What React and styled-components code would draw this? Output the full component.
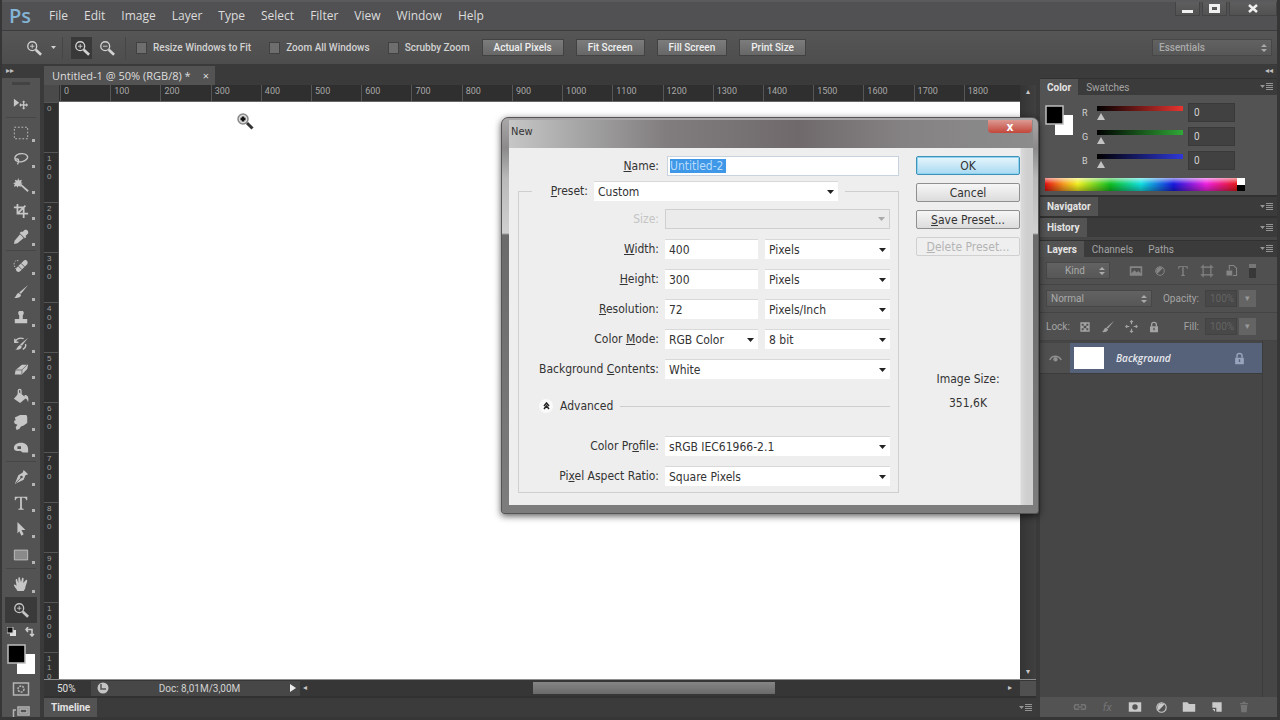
import React, { useState } from "react";
import styled, { createGlobalStyle, css } from "styled-components";

const MENUS = ["File", "Edit", "Image", "Layer", "Type", "Select", "Filter", "View", "Window", "Help"];
const ZOOM_OPTIONS = ["Resize Windows to Fit", "Zoom All Windows", "Scrubby Zoom"];
const ZOOM_BUTTONS = ["Actual Pixels", "Fit Screen", "Fill Screen", "Print Size"];
const RULER_X = Array.from({ length: 19 }, (_, i) => String(i * 100));
const RULER_Y = Array.from({ length: 12 }, (_, i) => String(i * 100));

const CHANNELS = [
    { name: "R", color: "#e8342f" },
    { name: "G", color: "#2fa836" },
    { name: "B", color: "#2f38d8" },
];

const TOOL_GROUPS = [
    ["move"],
    ["marquee", "lasso", "wand", "crop", "eyedropper"],
    ["heal", "brush", "stamp", "history", "eraser", "bucket", "smudge", "dodge"],
    ["pen", "type", "arrow", "rect"],
    ["hand", "zoom"],
];

const line = { fill: "none", stroke: "currentColor", strokeWidth: 1.5 };

const ICONS = {
    move: (
        <>
            <path d="M1 3v9l6-4.500z" />
            <path d="M12 5l2 2h-1.300v2.300H15V8l2 2.200-2 2.200V11h-2.300v2.300H14l-2 2-2-2h1.300V11H9v1.300l-2-2.100L9 8v1.300h2.300V7H10z" />
        </>
    ),
    marquee: <path {...line} strokeWidth="1" strokeDasharray="2 2" d="M1.500 2.500h15v13h-15z" />,
    lasso: (
        <path {...line} d="M4 11C0 8 3 3.500 9 3s9 3 6.500 6S8 13 4.500 11.500 3 8.500 5 9s1.500 3 0 6" />
    ),
    wand: (
        <>
            <path d="M6 1l1 3 3-1-1 3 2 1-3 1 1 3-3-1-1 2-1-2-3 1 1-3-2-1 3-1-1-3 3 1z" />
            <path {...line} strokeWidth="2" d="M8 8l9 8" />
        </>
    ),
    crop: <path {...line} strokeWidth="2" d="M5 1v11h12M1 5h11v12M5 12L14 3" />,
    eyedropper: (
        <>
            <path d="M11 3l2-2c2-1 5 1 4 4l-3 3 1 1-1.500 1.500-6-6L9 3z" />
            <path d="M8 6l4 4-7 6-4 1 1-4z" />
        </>
    ),
    heal: (
        <>
            <path {...line} strokeWidth="1" strokeDasharray="1.500 1.500" d="M6 3C2 2 0 6 2 10s3 4 4 4" />
            <path d="M12 3c2-2 6 1 4 4l-8 8c-3 2-6-1-4-4z" />
            <path stroke="#535353" strokeWidth="1" d="M9 6l4 4M6 9l4 4" />
        </>
    ),
    brush: (
        <>
            <path d="M17 1L9 11l-2-1.500z" />
            <path d="M6.500 10l2.500 2c0 3-4 4-8 3.500 3-1 2.500-5 5.500-5.500z" />
        </>
    ),
    stamp: <path d="M7 1h4c2 1 1 4 0 5v4h5v5H2v-5h5V6C6 5 5 2 7 1z" />,
    history: (
        <>
            <path d="M17 2l-7 9-2-1.500zM8 10l2 2c-1 3-4 4-8 3 3 0 3-4 6-5z" />
            <path {...line} d="M2 3v4h4M2.500 6C5 2 9 2 12 3M14 9c1 3-1 5-3 6" />
        </>
    ),
    eraser: (
        <>
            <path d="M10 3h7l-1 5-6 6H2l1-5z" />
            <path stroke="#6b6b6b" d="M3 9h7l6-6M10 9v5" fill="none" />
        </>
    ),
    bucket: (
        <>
            <path d="M7 5l8 6-7 6-7-5z" />
            <path {...line} d="M6 8V3c0-2 3-2 3 0v5" />
            <path d="M13 8c4 0 5 3 4 8-1-3-2-4-4-5z" />
        </>
    ),
    smudge: <path d="M8 1h7l1 2v7l-4 3-3 1-2 3-3 1-1-3 2-3-3-1-1-3 2-1-1-3z" />,
    dodge: (
        <path
            fillRule="evenodd"
            d="M1 9c0-4 4-6 8-6 5 0 8 3 8 7v4h-6l-3-2c-4 1-7 0-7-3zm4-2v3h4V7z"
        />
    ),
    pen: (
        <>
            <path d="M12 1l5 5-3 1-2 5-10 5 4-10 5-3z" />
            <path stroke="#535353" strokeWidth="1" d="M3 16l6-6" />
            <circle cx="9.500" cy="9" r="1.500" fill="#535353" />
        </>
    ),
    type: <path d="M2 2h14v4h-1c-.5-2-1-3-3-3h-2v11c0 1 .5 1.500 2 1.500v1H6v-1c1.500 0 2-.5 2-1.500V3H6C4 3 3.500 4 3 6H2z" />,
    arrow: <path d="M5 1l9 9H9.500l2.500 5-2.500 1.500L7 11.500 5 14z" />,
    rect: <path fill="#8a8a8a" stroke="currentColor" d="M1.500 3.500h15v11h-15z" />,
    hand: (
        <path d="M5 17c-1-3-4-5-4-7 1-1 2 0 3 1L3 5c0-2 2-2 2 0l1 3V3c0-2 2-2 2 0l1 4 1-4c0-2 2-1 2 0l-.5 5L14 5c1-1 2-1 2 1l-2 6c0 2-1 3-2 5z" />
    ),
    zoom: (
        <>
            <circle {...line} cx="7" cy="7" r="5" />
            <path d="M4.500 7h5M7 4.500v5" stroke="currentColor" />
            <path {...line} strokeWidth="3" d="M11 11l6 5.500" />
        </>
    ),
    zoomOut: (
        <>
            <circle {...line} cx="7" cy="7" r="5" />
            <path d="M4.500 7h5" stroke="currentColor" />
            <path {...line} strokeWidth="3" d="M11 11l6 5.500" />
        </>
    ),
    image: <path fillRule="evenodd" d="M1 3h16v12H1zm2 2v7l4-4 3 3 2-2 3 3V5z" />,
    adjust: (
        <>
            <circle {...line} cx="9" cy="9" r="6.500" />
            <path d="M9 3a6 6 0 0 0-4 10l8-8a6 6 0 0 0-4-2z" />
        </>
    ),
    shape: <path {...line} d="M4 4h10v10H4zM1 4h3V1M14 1v3h3M1 14h3v3M17 14h-3v3" />,
    smart: (
        <>
            <path {...line} d="M6 8V2h6l4 4v10h-5" />
            <path d="M2 9h8v7H2z" />
        </>
    ),
    pixels: <path fillRule="evenodd" d="M2 2h14v14H2zm2 2v3h3V4zm7 0v3h3V4zM7 7v4h4V7zm-3 4v3h3v-3zm7 0v3h3v-3z" />,
    cross: <path {...line} d="M9 1v5M9 12v5M1 9h5M12 9h5M7 3l2-2 2 2M7 15l2 2 2-2M3 7L1 9l2 2M15 7l2 2-2 2" />,
    lock: (
        <>
            <path {...line} strokeWidth="2" d="M5.500 8V5c0-4 7-4 7 0v3" />
            <path fillRule="evenodd" d="M3 8h12v9H3zm5 2v4h2v-4z" />
        </>
    ),
    eye: (
        <>
            <path {...line} strokeWidth="2" d="M1 11c3-7 12-7 16 0" />
            <circle cx="9" cy="10" r="3" />
        </>
    ),
    link: <path {...line} strokeWidth="2" d="M8 6H4C1 6 1 12 4 12h4M10 6h4c3 0 3 6 0 6h-4M6 9h6" />,
    mask: <path fillRule="evenodd" d="M1 3h16v12H1zm8 2.500a3.500 3.500 0 1 0 0 7 3.500 3.500 0 1 0 0-7z" />,
    folder: <path d="M1 3h6l2 2h8v10H1z" />,
    newLayer: <path fillRule="evenodd" d="M2 2h14v14H8V10H2zm0 10h4v4z" />,
    trash: <path d="M7 1h4v2h4v2H3V3h4zM4 6h10l-1 11H5z" />,
    quickMask: (
        <>
            <path {...line} d="M1.500 3h15v12h-15z" />
            <circle {...line} cx="9" cy="9" r="3" strokeDasharray="2 1" />
        </>
    ),
    screenMode: <path {...line} d="M6 3h11v8H6zM4 6H1.500v9H13v-2M8 5h7v4H8z" />,
};

function Icon({ name, size = 16 }) {
    return (
        <svg width={size} height={size} viewBox="0 0 18 18" fill="currentColor" aria-hidden="true">
            {ICONS[name]}
        </svg>
    );
}

function PanelMenu() {
    return (
        <PanelMenuButton aria-label="Panel menu">
            <svg width="13" height="8" viewBox="0 0 13 8" fill="currentColor">
                <path d="M0 2h5L2.500 5zM6 0h7v1H6zM6 2h7v1H6zM6 4h7v1H6zM6 6h7v1H6z" />
            </svg>
        </PanelMenuButton>
    );
}

function UpDown() {
    return (
        <svg width="6" height="10" viewBox="0 0 6 10" fill="currentColor">
            <path d="M0 4l3-3 3 3zM0 6h6L3 9z" />
        </svg>
    );
}

function Combo({ id, value, disabled, label }) {
    return (
        <ComboBox $disabled={disabled}>
            <select id={id} aria-label={label} disabled={disabled} defaultValue={value}>
                <option>{value}</option>
            </select>
            <svg width="7" height="4" viewBox="0 0 7 4" fill="currentColor">
                <path d="M0 0h7L3.500 4z" />
            </svg>
        </ComboBox>
    );
}

function NewDialog() {
    const [name, setName] = useState("Untitled-2");
    const [width, setWidth] = useState("400");
    const [height, setHeight] = useState("300");
    const [resolution, setResolution] = useState("72");

    return (
        <Dialog role="dialog" aria-labelledby="dialog-title">
            <DialogTitle>
                <h2 id="dialog-title">New</h2>
                <CloseDialog aria-label="Close">x</CloseDialog>
            </DialogTitle>
            <DialogBody>
                <Form>
                    <NameRow>
                        <Label htmlFor="name"><u>N</u>ame:</Label>
                        <NameField>
                            <NameInput id="name" size="8" value={name} onChange={(e) => setName(e.target.value)} />
                        </NameField>
                    </NameRow>
                    <Group>
                        <legend>
                            <Label htmlFor="preset"><u>P</u>reset:</Label>
                            <Combo id="preset" value="Custom" />
                        </legend>
                        <Rows>
                            <Row>
                                <Label htmlFor="size" $disabled>Size:</Label>
                                <Combo id="size" value="" disabled />
                            </Row>
                            <Row>
                                <Label htmlFor="width"><u>W</u>idth:</Label>
                                <Pair>
                                    <TextInput id="width" value={width} onChange={(e) => setWidth(e.target.value)} />
                                    <Combo label="Width unit" value="Pixels" />
                                </Pair>
                            </Row>
                            <Row>
                                <Label htmlFor="height"><u>H</u>eight:</Label>
                                <Pair>
                                    <TextInput id="height" value={height} onChange={(e) => setHeight(e.target.value)} />
                                    <Combo label="Height unit" value="Pixels" />
                                </Pair>
                            </Row>
                            <Row>
                                <Label htmlFor="resolution"><u>R</u>esolution:</Label>
                                <Pair>
                                    <TextInput id="resolution" value={resolution} onChange={(e) => setResolution(e.target.value)} />
                                    <Combo label="Resolution unit" value="Pixels/Inch" />
                                </Pair>
                            </Row>
                            <Row>
                                <Label htmlFor="mode">Color <u>M</u>ode:</Label>
                                <Pair>
                                    <Combo id="mode" value="RGB Color" />
                                    <Combo label="Bit depth" value="8 bit" />
                                </Pair>
                            </Row>
                            <Row>
                                <Label htmlFor="contents">Background <u>C</u>ontents:</Label>
                                <Combo id="contents" value="White" />
                            </Row>
                        </Rows>
                        <Advanced>
                            <button type="button" aria-label="Collapse advanced">
                                <svg width="7" height="8" viewBox="0 0 7 8" fill="none" stroke="#222" strokeWidth="1.500">
                                    <path d="M1 4l2.500-3L6 4M1 7l2.500-3L6 7" />
                                </svg>
                            </button>
                            Advanced
                            <hr />
                        </Advanced>
                        <Rows>
                            <Row>
                                <Label htmlFor="profile">Color Pr<u>o</u>file:</Label>
                                <Combo id="profile" value="sRGB IEC61966-2.1" />
                            </Row>
                            <Row>
                                <Label htmlFor="ratio">Pi<u>x</u>el Aspect Ratio:</Label>
                                <Combo id="ratio" value="Square Pixels" />
                            </Row>
                        </Rows>
                    </Group>
                </Form>
                <Actions>
                    <ActionButton $primary>OK</ActionButton>
                    <ActionButton>Cancel</ActionButton>
                    <ActionButton><u>S</u>ave Preset...</ActionButton>
                    <ActionButton disabled><u>D</u>elete Preset...</ActionButton>
                    <ImageSize>
                        <dt>Image Size:</dt>
                        <dd>351,6K</dd>
                    </ImageSize>
                </Actions>
            </DialogBody>
        </Dialog>
    );
}

function ColorPanel() {
    return (
        <section>
            <Tabs>
                <Tab $active>Color</Tab>
                <Tab>Swatches</Tab>
                <PanelMenu />
            </Tabs>
            <ColorBody>
                <ColorControls>
                    <Swatches />
                    <Channels>
                        {CHANNELS.map(({ name, color }) => (
                            <Channel key={name}>
                                <label htmlFor={"channel" + name}>{name}</label>
                                <Slider id={"channel" + name} type="range" min="0" max="255" defaultValue="0" $color={color} />
                                <ChannelValue aria-label={name + " value"} defaultValue="0" />
                            </Channel>
                        ))}
                    </Channels>
                </ColorControls>
                <Spectrum>
                    <Hues />
                    <BlackWhite />
                </Spectrum>
            </ColorBody>
        </section>
    );
}

function Swatches() {
    return (
        <svg width="28" height="30" viewBox="0 0 28 30" aria-hidden="true">
            <path fill="#fff" d="M10 10h18v20H10z" />
            <path fill="#000" stroke="#bdbdbd" strokeWidth="1.500" d="M1 1h17v18H1z" />
        </svg>
    );
}

function LayersPanel() {
    return (
        <LayersSection>
            <Tabs>
                <Tab $active>Layers</Tab>
                <Tab>Channels</Tab>
                <Tab>Paths</Tab>
                <PanelMenu />
            </Tabs>
            <LayerRow>
                <DarkSelect $width={64} $indent={18}>
                    <select aria-label="Filter kind" defaultValue="Kind"><option>Kind</option></select>
                    <UpDown />
                </DarkSelect>
                <FilterIcons>
                    <Icon name="image" size={14} />
                    <Icon name="adjust" size={12} />
                    <Icon name="type" size={12} />
                    <Icon name="shape" size={14} />
                    <Icon name="smart" size={13} />
                    <FilterSwitch />
                </FilterIcons>
            </LayerRow>
            <LayerRow>
                <DarkSelect $width={106} $indent={4}>
                    <select aria-label="Blend mode" defaultValue="Normal"><option>Normal</option></select>
                    <UpDown />
                </DarkSelect>
                <Percent>
                    <label htmlFor="opacity">Opacity:</label>
                    <input id="opacity" defaultValue="100%" disabled />
                    <button aria-label="Opacity slider">▾</button>
                </Percent>
            </LayerRow>
            <LayerRow>
                <LockIcons>
                    <span>Lock:</span>
                    <Icon name="pixels" size={12} />
                    <Icon name="brush" size={14} />
                    <Icon name="cross" size={13} />
                    <Icon name="lock" size={12} />
                </LockIcons>
                <Percent>
                    <label htmlFor="fill">Fill:</label>
                    <input id="fill" defaultValue="100%" disabled />
                    <button aria-label="Fill slider">▾</button>
                </Percent>
            </LayerRow>
            <LayerList>
                <Layer>
                    <Eye aria-label="Toggle visibility"><Icon name="eye" size={13} /></Eye>
                    <LayerMain>
                        <Thumb />
                        <em>Background</em>
                        <Icon name="lock" size={13} />
                    </LayerMain>
                </Layer>
            </LayerList>
            <LayerTools>
                <ToolIcon aria-label="Link layers" $dim><Icon name="link" size={14} /></ToolIcon>
                <ToolIcon aria-label="Layer style" $dim><i>fx</i></ToolIcon>
                <ToolIcon aria-label="Add mask"><Icon name="mask" size={14} /></ToolIcon>
                <ToolIcon aria-label="Adjustment layer"><Icon name="adjust" size={13} /></ToolIcon>
                <ToolIcon aria-label="New group"><Icon name="folder" size={14} /></ToolIcon>
                <ToolIcon aria-label="New layer"><Icon name="newLayer" size={12} /></ToolIcon>
                <ToolIcon aria-label="Delete layer" $dim><Icon name="trash" size={12} /></ToolIcon>
            </LayerTools>
        </LayersSection>
    );
}

export default function App() {
    const [tool, setTool] = useState("zoom");

    return (
        <>
            <GlobalStyle />
            <Frame>
                <MenuBar>
                    <Logo>Ps</Logo>
                    <Menus>
                        {MENUS.map((m) => <button key={m}>{m}</button>)}
                    </Menus>
                    <WindowButtons>
                        <WindowButton aria-label="Minimize">
                            <svg width="11" height="10"><path d="M0 6h11v3H0z" fill="currentColor" /></svg>
                        </WindowButton>
                        <WindowButton aria-label="Maximize">
                            <svg width="11" height="10"><path d="M1.500 1.500h8v6h-8z" fill="none" stroke="currentColor" strokeWidth="3" /></svg>
                        </WindowButton>
                        <WindowButton aria-label="Close" $wide>
                            <svg width="10" height="9"><path d="M1 1l8 7M9 1L1 8" stroke="currentColor" strokeWidth="2.500" /></svg>
                        </WindowButton>
                    </WindowButtons>
                </MenuBar>

                <OptionsBar>
                    <CurrentTool>
                        <Icon name="zoom" />
                        <svg width="5" height="3" fill="currentColor"><path d="M0 0h5L2.500 3z" /></svg>
                    </CurrentTool>
                    <ZoomModes>
                        <ZoomMode aria-label="Zoom in" $active><Icon name="zoom" /></ZoomMode>
                        <ZoomMode aria-label="Zoom out"><Icon name="zoomOut" /></ZoomMode>
                    </ZoomModes>
                    <Checks>
                        {ZOOM_OPTIONS.map((o) => (
                            <label key={o}><input type="checkbox" />{o}</label>
                        ))}
                    </Checks>
                    <ViewButtons>
                        {ZOOM_BUTTONS.map((b) => <button key={b}>{b}</button>)}
                    </ViewButtons>
                    <WorkspaceSelect $width={120} $indent={6}>
                        <select aria-label="Workspace" defaultValue="Essentials"><option>Essentials</option></select>
                        <UpDown />
                    </WorkspaceSelect>
                </OptionsBar>

                <Workspace>
                    <ToolColumn>
                        <DockHeader>▸▸</DockHeader>
                        <ToolPanel>
                            <Grip />
                            {TOOL_GROUPS.map((group) => (
                                <ToolGroup key={group[0]}>
                                    {group.map((t) => (
                                        <Tool key={t} aria-label={t} $active={t === tool} onClick={() => setTool(t)}>
                                            <Icon name={t} />
                                            {t !== "move" && t !== "zoom" && <Corner />}
                                        </Tool>
                                    ))}
                                </ToolGroup>
                            ))}
                            <MiniSwatches>
                                <svg width="10" height="10"><path d="M3 3h6v6H3z" fill="#ddd" /><path d="M0 0h6v6H0z" fill="#111" stroke="#ccc" /></svg>
                                <svg width="10" height="10" fill="none" stroke="#ccc" strokeWidth="1.500"><path d="M3 0L1 2.500 3 5M1 2.500h6V9M5 7l2 2 2-2" /></svg>
                            </MiniSwatches>
                            <Swatches />
                            <Extra aria-label="Quick mask"><Icon name="quickMask" size={18} /></Extra>
                            <Extra aria-label="Screen mode"><Icon name="screenMode" size={18} /></Extra>
                        </ToolPanel>
                    </ToolColumn>

                    <Document>
                        <DocTabs>
                            <DocTab>Untitled-1 @ 50% (RGB/8) * <button aria-label="Close tab">×</button></DocTab>
                        </DocTabs>
                        <DocGrid>
                            <RulerCorner />
                            <RulerTop>{RULER_X.map((n) => <span key={n}>{n}</span>)}</RulerTop>
                            <RulerLeft>
                                {RULER_Y.map((n) => (
                                    <div key={n}>{n.split("").map((d, i) => <span key={i}>{d}</span>)}</div>
                                ))}
                            </RulerLeft>
                            <Canvas>
                                <Cursor>
                                    <svg width="18" height="18" viewBox="0 0 18 18">
                                        <circle cx="7" cy="7" r="5" fill="#ddd" stroke="#888" strokeWidth="1.500" />
                                        <path d="M4.500 7h5M7 4.500v5" stroke="#111" strokeWidth="2.500" />
                                        <path d="M11 11l5.500 5.500" stroke="#333" strokeWidth="3" />
                                    </svg>
                                </Cursor>
                            </Canvas>
                            <VScroll><span>▴</span><span>▾</span></VScroll>
                        </DocGrid>
                        <StatusBar>
                            <ZoomLevel>50%</ZoomLevel>
                            <DocInfo>
                                <svg width="12" height="12" viewBox="0 0 12 12">
                                    <circle cx="6" cy="6" r="5.500" fill="#c4c4c4" />
                                    <path d="M4 2v5h5" fill="none" stroke="#555" strokeWidth="1.500" />
                                </svg>
                                <span>Doc: 8,01M/3,00M</span>
                                <svg width="6" height="8" fill="#eee"><path d="M0 0l6 4-6 4z" /></svg>
                            </DocInfo>
                            <HScroll><span>◂</span><HThumb /><span>▸</span></HScroll>
                            <ScrollCorner />
                        </StatusBar>
                        <Tabs $tall>
                            <Tab $active>Timeline</Tab>
                            <PanelMenu />
                        </Tabs>
                    </Document>

                    <Dock>
                        <DockHeader $right>◂◂</DockHeader>
                        <ColorPanel />
                        <Tabs $tall><Tab $active>Navigator</Tab><PanelMenu /></Tabs>
                        <Tabs $tall><Tab $active>History</Tab><PanelMenu /></Tabs>
                        <LayersPanel />
                    </Dock>
                </Workspace>
                <NewDialog />
            </Frame>
        </>
    );
}

const GlobalStyle = createGlobalStyle`
* {
    box-sizing: border-box;
}
body {
    margin: 0;
    background: #3a3a3a;
    font-family: Roboto, "Open Sans", sans-serif;
}
button, input, select {
    font: inherit;
    color: inherit;
    border: 0;
    margin: 0;
    padding: 0;
    background: none;
    border-radius: 0;
}
svg {
    display: block;
    flex: none;
}
`;

const Frame = styled.div`
    position: relative;
    display: flex;
    flex-direction: column;
    height: 100vh;
    overflow: hidden;
    border: solid #363636;
    border-width: 0 3px 3px 2px;
    color: #d2d2d2;
    font-size: 10px;
`;

const MenuBar = styled.header`
    display: flex;
    align-items: center;
    height: 31px;
    flex: none;
    background: #515153;
    border-top: 2px solid #5a5a5c;
    border-bottom: 1px solid #3c3c3c;
`;

const Logo = styled.span`
    width: 40px;
    padding-left: 7px;
    color: #84b4d6;
    font: 600 20px/24px "Open Sans", sans-serif;
`;

const Menus = styled.nav`
    display: flex;
    gap: 16px;
    padding-left: 7px;
    font-family: "Open Sans", sans-serif;
    font-size: 12px;
    line-height: 16px;
    color: #dcdcdc;
`;

const WindowButtons = styled.div`
    display: flex;
    align-self: flex-start;
    gap: 2px;
    margin-left: auto;
`;

const WindowButton = styled.button`
    display: grid;
    place-items: center;
    width: ${(p) => (p.$wide ? "48px" : "25px")};
    height: 14px;
    color: #f0f0f0;
    background: linear-gradient(#5e5e5e, #525252);
    border: solid #444;
    border-width: 0 1px 1px;
`;

const OptionsBar = styled.div`
    display: flex;
    align-items: center;
    height: 33px;
    flex: none;
    padding: 0 5px 0 22px;
    background: linear-gradient(#565656, #4d4d4d);
    font-weight: 500;
`;

const CurrentTool = styled.div`
    display: flex;
    align-items: center;
    justify-content: space-between;
    width: 39px;
    height: 22px;
    padding: 0 6px 0 2px;
    border-right: 1px solid #454545;
`;

const ZoomModes = styled.div`
    display: flex;
    gap: 4px;
    width: 63px;
    height: 22px;
    padding-left: 8px;
    border-right: 1px solid #454545;
`;

const ZoomMode = styled.button`
    display: grid;
    place-items: center;
    width: 21px;
    height: 22px;
    background: ${(p) => (p.$active ? "#393939" : "none")};
`;

const Checks = styled.div`
    display: flex;
    gap: 18px;
    padding-left: 10px;
    label {
        display: flex;
        align-items: center;
        gap: 6px;
    }
    input {
        appearance: none;
        width: 11px;
        height: 12px;
        background: #6e6e6e;
        border: 1px solid #414141;
    }
`;

const ViewButtons = styled.div`
    display: flex;
    gap: 12px;
    padding-left: 12px;
    button {
        height: 17px;
        padding: 0 11px;
        color: #eee;
        background: linear-gradient(#7c7c7c, #676767);
        border: 1px solid #424242;
    }
`;

const DarkSelect = styled.div`
    display: grid;
    align-items: center;
    width: ${(p) => p.$width}px;
    height: 17px;
    background: linear-gradient(#626262, #575757);
    border: 1px solid #474747;
    color: #aaa;
    select {
        grid-area: 1 / 1;
        appearance: none;
        width: 100%;
        padding-left: ${(p) => p.$indent}px;
    }
    svg {
        grid-area: 1 / 1;
        justify-self: end;
        margin-right: 4px;
        pointer-events: none;
    }
`;

const WorkspaceSelect = styled(DarkSelect)`
    margin-left: auto;
`;

const Workspace = styled.main`
    display: flex;
    gap: 4px;
    flex: 1;
    min-height: 0;
`;

const ToolColumn = styled.aside`
    display: flex;
    flex-direction: column;
    width: 38px;
    flex: none;
`;

const DockHeader = styled.div`
    height: 14px;
    flex: none;
    padding: 0 4px;
    background: #3b3b3b;
    color: #c0c0c0;
    font: 8px/14px "DejaVu Sans", sans-serif;
    text-align: ${(p) => (p.$right ? "right" : "left")};
`;

const ToolPanel = styled.div`
    display: flex;
    flex-direction: column;
    align-items: center;
    flex: 1;
    min-height: 0;
    background: #535353;
`;

const Grip = styled.div`
    width: 18px;
    height: 3px;
    margin: 4px 0 6px;
    flex: none;
    background: #434343;
`;

const ToolGroup = styled.div`
    display: flex;
    flex-direction: column;
    align-items: center;
    width: 30px;
    & + & {
        border-top: 1px solid #464646;
        padding-top: 2px;
    }
`;

const Tool = styled.button`
    display: grid;
    place-items: center;
    width: 32px;
    height: 26px;
    color: #c6c6c6;
    background: ${(p) => (p.$active ? "#3a3a3a" : "none")};
    svg {
        grid-area: 1 / 1;
    }
`;

const Corner = styled.i`
    grid-area: 1 / 1;
    place-self: end;
    width: 3px;
    height: 3px;
    margin: 0 2px 4px 0;
    background: #b4b4b4;
`;

const MiniSwatches = styled.div`
    display: flex;
    gap: 8px;
    margin: 4px 0 7px;
`;

const Extra = styled.button`
    margin-top: 6px;
    color: #b5b5b5;
`;

const Document = styled.section`
    display: flex;
    flex-direction: column;
    flex: 1;
    min-width: 0;
    background: #3a3a3a;
`;

const DocTabs = styled.div`
    display: flex;
    align-items: flex-end;
    height: 21px;
    flex: none;
`;

const DocTab = styled.div`
    display: flex;
    align-items: center;
    gap: 12px;
    height: 19px;
    padding: 0 6px 0 8px;
    background: #535353;
    font-family: "Open Sans", sans-serif;
    font-weight: 500;
    font-size: 11px;
    color: #dedede;
`;

const DocGrid = styled.div`
    display: grid;
    grid-template: 17px minmax(0, 1fr) / 15px minmax(0, 1fr) 16px;
    flex: 1;
    min-height: 0;
    border-bottom: 1px solid #8e8e8e;
`;

const RulerCorner = styled.div`
    background: #4a4a4a;
`;

const RulerTop = styled.div`
    grid-area: 1 / 2;
    display: grid;
    grid-template-columns: repeat(19, minmax(0, 1fr));
    padding: 0 6px 0 1px;
    background: #2f2f2f;
    color: #a8a8a8;
    font-size: 9px;
    line-height: 13px;
    border-bottom: 1px solid #666;
    span {
        padding-left: 3px;
        border-left: 1px solid #565656;
    }
`;

const RulerLeft = styled.div`
    grid-area: 2 / 1;
    overflow: hidden;
    background: #2f2f2f;
    color: #a0a0a0;
    font-family: "Liberation Sans", sans-serif;
    font-size: 8px;
    line-height: 9px;
    border-right: 1px solid #4a4a4a;
    div {
        display: flex;
        flex-direction: column;
        height: 50px;
        padding: 1px 0 0 3px;
        border-top: 1px solid #565656;
    }
`;

const Canvas = styled.div`
    grid-area: 2 / 2;
    position: relative;
    background: #fff;
`;

const Cursor = styled.span`
    position: absolute;
    left: 177px;
    top: 10px;
`;

const VScroll = styled.div`
    grid-area: 1 / 3 / 3 / 4;
    display: flex;
    flex-direction: column;
    align-items: center;
    justify-content: space-between;
    background: linear-gradient(90deg, #343434, #404040);
    color: #c8c8c8;
    font: 8px/14px "DejaVu Sans", sans-serif;
`;

const StatusBar = styled.div`
    display: flex;
    align-items: center;
    height: 16px;
    flex: none;
    background: #363636;
`;

const ZoomLevel = styled.span`
    width: 47px;
    padding-left: 13px;
    color: #e0e0e0;
`;

const DocInfo = styled.div`
    display: flex;
    align-items: center;
    justify-content: space-between;
    width: 209px;
    height: 15px;
    padding: 0 4px 0 6px;
    background: #474747;
`;

const HScroll = styled.div`
    display: grid;
    grid-template-columns: 10fr minmax(0, 220fr) minmax(0, 238fr) minmax(0, 230fr) 12px;
    align-items: center;
    flex: 1;
    font: 8px/14px "DejaVu Sans", sans-serif;
    color: #c8c8c8;
    span:first-child {
        grid-column: 1;
        padding-left: 3px;
    }
    span:last-child {
        grid-column: 5;
    }
`;

const HThumb = styled.div`
    grid-column: 3;
    height: 12px;
    background: linear-gradient(#858585, #6a6a6a);
`;

const ScrollCorner = styled.div`
    width: 16px;
    height: 15px;
    background: #505050;
`;

const Tabs = styled.div`
    display: flex;
    align-items: stretch;
    height: ${(p) => (p.$tall ? "21px" : "17px")};
    flex: none;
    background: #3b3b3b;
    border-top: ${(p) => (p.$tall ? "2px" : "1px")} solid #313131;
`;

const Tab = styled.button`
    padding: 0 7px;
    ${(p) => p.$active
        ? css`
            background: #535353;
            color: #e4e4e4;
            font-weight: bold;
        `
        : css`
            color: #a4a4a4;
            margin-left: 1px;
        `}
`;

const PanelMenuButton = styled.button`
    margin: 0 4px 0 auto;
    color: #949494;
`;

const Dock = styled.aside`
    display: flex;
    flex-direction: column;
    width: 237px;
    flex: none;
    background: #464646;
`;

const ColorBody = styled.div`
    display: flex;
    flex-direction: column;
    gap: 8px;
    padding: 8px 0 4px 5px;
    background: #535353;
`;

const ColorControls = styled.div`
    display: flex;
    gap: 9px;
    > svg {
        margin-top: 2px;
    }
`;

const Channels = styled.div`
    display: flex;
    flex-direction: column;
    gap: 5px;
`;

const Channel = styled.div`
    display: grid;
    grid-template-columns: 15px 86px 48px;
    align-items: center;
    height: 19px;
    label {
        font-size: 9px;
    }
`;

const Slider = styled.input`
    appearance: none;
    width: 86px;
    height: 14px;
    &::-webkit-slider-runnable-track {
        height: 5px;
        margin-bottom: 8px;
        background: linear-gradient(90deg, #000, ${(p) => p.$color});
    }
    &::-webkit-slider-thumb {
        appearance: none;
        width: 8px;
        height: 7px;
        margin-top: 7px;
        background: #c4c4c4;
        clip-path: polygon(50% 0, 100% 100%, 0 100%);
    }
`;

const ChannelValue = styled.input`
    width: 47px;
    height: 19px;
    margin-left: 5px;
    padding-left: 5px;
    background: #414141;
    border: 1px solid #393939;
`;

const Spectrum = styled.div`
    display: flex;
    width: 200px;
    height: 13px;
`;

const Hues = styled.div`
    flex: 1;
    background:
        linear-gradient(rgba(255, 255, 255, 0.6), transparent 45%, rgba(0, 0, 0, 0.3)),
        linear-gradient(90deg, #e51010, #f5a020 10%, #f0f020 17%, #10c020 34%, #10e0e0 50%, #1818e0 67%, #f020e0 84%, #e81818);
`;

const BlackWhite = styled.div`
    width: 8px;
    background: linear-gradient(#fff 50%, #000 50%);
`;

const LayersSection = styled.section`
    display: flex;
    flex-direction: column;
    flex: 1;
    min-height: 0;
    padding-top: 3px;
`;

const LayerRow = styled.div`
    display: flex;
    align-items: center;
    justify-content: space-between;
    height: 28px;
    flex: none;
    padding: 0 21px 0 6px;
    background: #505050;
    border-bottom: 1px solid #444;
    color: #a4a4a4;
`;

const FilterIcons = styled.div`
    display: flex;
    align-items: center;
    gap: 11px;
    color: #858585;
`;

const FilterSwitch = styled.i`
    width: 7px;
    height: 14px;
    background: linear-gradient(#777 30%, #383838 30%);
`;

const Percent = styled.div`
    display: flex;
    align-items: center;
    label {
        margin-right: 6px;
    }
    input {
        width: 32px;
        height: 17px;
        padding-left: 4px;
        background: #484848;
        border: 1px solid #424242;
        color: #646464;
    }
    button {
        width: 17px;
        height: 17px;
        margin-left: 2px;
        background: #646464;
        color: #999;
        font-size: 9px;
        line-height: 9px;
    }
`;

const LockIcons = styled.div`
    display: flex;
    align-items: center;
    gap: 10px;
    span {
        width: 23px;
    }
`;

const LayerList = styled.div`
    flex: 1;
    min-height: 0;
    margin-right: 14px;
    padding-top: 2px;
    border-right: 1px solid #3c3c3c;
`;

const Layer = styled.div`
    display: flex;
    height: 31px;
    border-bottom: 1px solid #3c3c3c;
`;

const Eye = styled.button`
    display: grid;
    place-items: center;
    width: 30px;
    color: #8e8e8e;
    background: #4f4f4f;
`;

const LayerMain = styled.div`
    display: flex;
    align-items: center;
    gap: 12px;
    flex: 1;
    padding: 0 16px 0 4px;
    background: #56627a;
    color: #e6e9ee;
    font-family: "Open Sans", sans-serif;
    font-weight: 600;
    svg {
        margin-left: auto;
        color: #98a4bd;
    }
`;

const Thumb = styled.i`
    width: 30px;
    height: 22px;
    background: #fff;
`;

const LayerTools = styled.div`
    display: flex;
    align-items: center;
    justify-content: space-between;
    height: 20px;
    flex: none;
    padding: 0 24px 0 31px;
    background: #535353;
`;

const ToolIcon = styled.button`
    display: grid;
    place-items: center;
    width: 18px;
    height: 18px;
    color: ${(p) => (p.$dim ? "#747474" : "#cacaca")};
    font-size: 11px;
`;

const Dialog = styled.div`
    position: absolute;
    left: 499px;
    top: 117px;
    width: 538px;
    padding: 2px 5px 8px 7px;
    border: 1px solid #555;
    border-radius: 7px 7px 3px 3px;
    background: linear-gradient(#a9a7a8, #8c8a8b 30px, #b9b9b9 60px, #d0d0d0 115px, #6b6b6b 117px, #7d7d7d);
    box-shadow: 0 2px 7px rgba(0, 0, 0, 0.65);
    color: #333;
    font-family: "DejaVu Sans Condensed", "DejaVu Sans", sans-serif;
    font-stretch: condensed;
    font-size: 12px;
`;

const DialogTitle = styled.div`
    display: flex;
    align-items: flex-start;
    justify-content: space-between;
    height: 28px;
    padding: 0 1px 0 2px;
    background: linear-gradient(90deg, #c6c6c6, #a9a9a9 12%, #817d7f 30%, #6f696b 55%, #858283 75%, #8c8c8c);
    h2 {
        margin: 5px 0 0;
        font-size: 11px;
        font-weight: normal;
    }
`;

const CloseDialog = styled.button`
    width: 44px;
    height: 13px;
    background: linear-gradient(#dc9a92, #c2463a);
    border-radius: 0 0 4px 4px;
    color: #fff;
    font-weight: bold;
    line-height: 10px;
`;

const DialogBody = styled.div`
    display: grid;
    grid-template-columns: minmax(0, 1fr) 104px;
    gap: 17px;
    padding: 8px 13px 12px 9px;
    background: linear-gradient(270deg, #cfcfcf 6px, #dadada 12px, #eee 13px);
`;

const Form = styled.form`
    display: flex;
    flex-direction: column;
    gap: 5px;
`;

const NameRow = styled.div`
    display: grid;
    grid-template-columns: 141px 1fr;
    gap: 8px;
    align-items: center;
    height: 20px;
`;

const Label = styled.label`
    color: ${(p) => (p.$disabled ? "#c4c4c4" : "inherit")};
    text-align: right;
    white-space: nowrap;
`;

const field = css`
    height: 20px;
    background: #fff;
    border-top: 1px solid #d8d8d8;
`;

const NameField = styled.div`
    ${field}
    display: flex;
    align-items: center;
    padding-left: 2px;
    border: 1px solid #c9d3df;
`;

const NameInput = styled.input`
    width: 56px;
    height: 14px;
    background: #3f97e8;
    color: #b9dcfa;
`;

const TextInput = styled.input`
    ${field}
    width: 93px;
    padding-left: 4px;
`;

const ComboBox = styled.div`
    ${field}
    display: grid;
    align-items: center;
    min-width: 0;
    ${(p) => p.$disabled && css`
        background: #ebebeb;
        border: 1px solid #cfcfcf;
        color: #aaa;
    `}
    select {
        grid-area: 1 / 1;
        appearance: none;
        width: 100%;
        padding-left: 4px;
    }
    svg {
        grid-area: 1 / 1;
        justify-self: end;
        margin-right: 4px;
        color: ${(p) => (p.$disabled ? "#aaa" : "#222")};
        pointer-events: none;
    }
`;

const Group = styled.fieldset`
    min-width: 0;
    margin: 0;
    padding: 8px 8px 6px 0;
    border: 1px solid #cfcfcf;
    legend {
        display: grid;
        grid-template-columns: 56px 244px;
        gap: 6px;
        align-items: center;
        margin-left: 13px;
        padding: 0 7px 0 0;
    }
`;

const Rows = styled.div`
    display: grid;
    gap: 10px;
`;

const Row = styled.div`
    display: grid;
    grid-template-columns: 140px minmax(0, 1fr);
    gap: 6px;
    align-items: center;
    height: 20px;
`;

const Pair = styled.div`
    display: grid;
    grid-template-columns: 93px minmax(0, 1fr);
    gap: 7px;
`;

const Advanced = styled.div`
    display: flex;
    align-items: center;
    gap: 7px;
    height: 20px;
    margin: 17px 0 20px;
    padding-left: 20px;
    button {
        display: grid;
        place-items: center;
        width: 14px;
        height: 14px;
        background: #fafafa;
        border-radius: 50%;
    }
    hr {
        flex: 1;
        margin: 0;
        border: 0;
        border-top: 1px solid #cdcdcd;
    }
`;

const Actions = styled.div`
    display: flex;
    flex-direction: column;
    gap: 8px;
`;

const ActionButton = styled.button`
    height: 19px;
    border: 1px solid #8f8f8f;
    border-radius: 2px;
    background: linear-gradient(#f6f6f6, #dcdcdc);
    line-height: 16px;
    ${(p) => p.$primary && css`
        border-color: #3f93b8;
        background: linear-gradient(#e6f5fc, #a9daf2);
        box-shadow: inset 0 0 0 1px #8fd3f0;
    `}
    &:disabled {
        border-color: #d0d0d0;
        background: #efefef;
        color: #b4b4b4;
    }
`;

const ImageSize = styled.dl`
    display: grid;
    gap: 8px;
    margin: 107px 0 0;
    text-align: center;
    line-height: 16px;
    dd {
        margin: 0;
    }
`;
